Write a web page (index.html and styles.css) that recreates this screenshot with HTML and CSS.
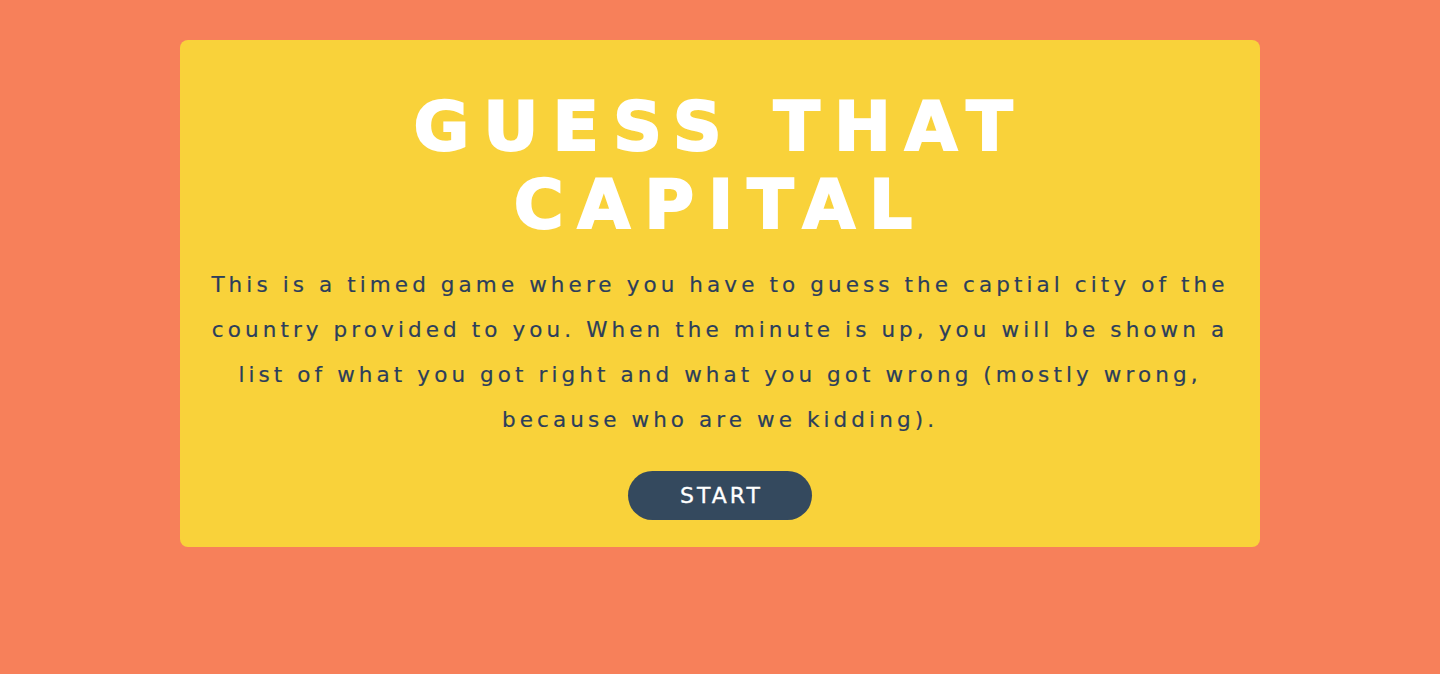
FILE: index.html
```html
<!DOCTYPE html>
<html lang="en">
<head>
<meta charset="utf-8">
<title>Guess That Capital</title>
<link rel="stylesheet" href="styles.css">
</head>
<body>
<main class="card">
  <h1 class="title">GUESS THAT CAPITAL</h1>
  <p class="intro">This is a timed game where you have to guess the captial city of the country provided to you. When the minute is up, you will be shown a list of what you got right and what you got wrong (mostly wrong, because who are we kidding).</p>
  <button class="start" type="button">START</button>
</main>
</body>
</html>
```
FILE: styles.css
```css
html, body {
  margin: 0;
  padding: 0;
}
body {
  background: #f7805a;
  min-height: 674px;
  padding-top: 40px;
  box-sizing: border-box;
}
.card {
  width: 1080px;
  margin: 0 auto;
  background: #f9d23a;
  border-radius: 8px;
  padding: 48px 28px 27px;
  box-sizing: border-box;
  display: flex;
  flex-direction: column;
  align-items: center;
  text-align: center;
}
.title {
  margin: 0;
  width: 640px;
  font-family: "DejaVu Sans", sans-serif;
  font-weight: 900;
  font-size: 68px;
  line-height: 78px;
  letter-spacing: 14px;
  color: #ffffff;
  -webkit-text-stroke: 2px #ffffff;
}
.intro {
  margin: 18px 0 29px;
  font-family: "DejaVu Sans", sans-serif;
  font-size: 21.5px;
  line-height: 45px;
  letter-spacing: 4.1px;
  color: #2c3e5c;
  -webkit-text-stroke: 0.2px #2c3e5c;
}
.start {
  width: 184px;
  height: 49px;
  border: 0;
  border-radius: 25px;
  background: #34495e;
  color: #ffffff;
  font-family: "DejaVu Sans", sans-serif;
  font-size: 22px;
  letter-spacing: 3px;
  padding: 0 0 0 3px;
  cursor: pointer;
  -webkit-text-stroke: 0.3px #ffffff;
}
```
